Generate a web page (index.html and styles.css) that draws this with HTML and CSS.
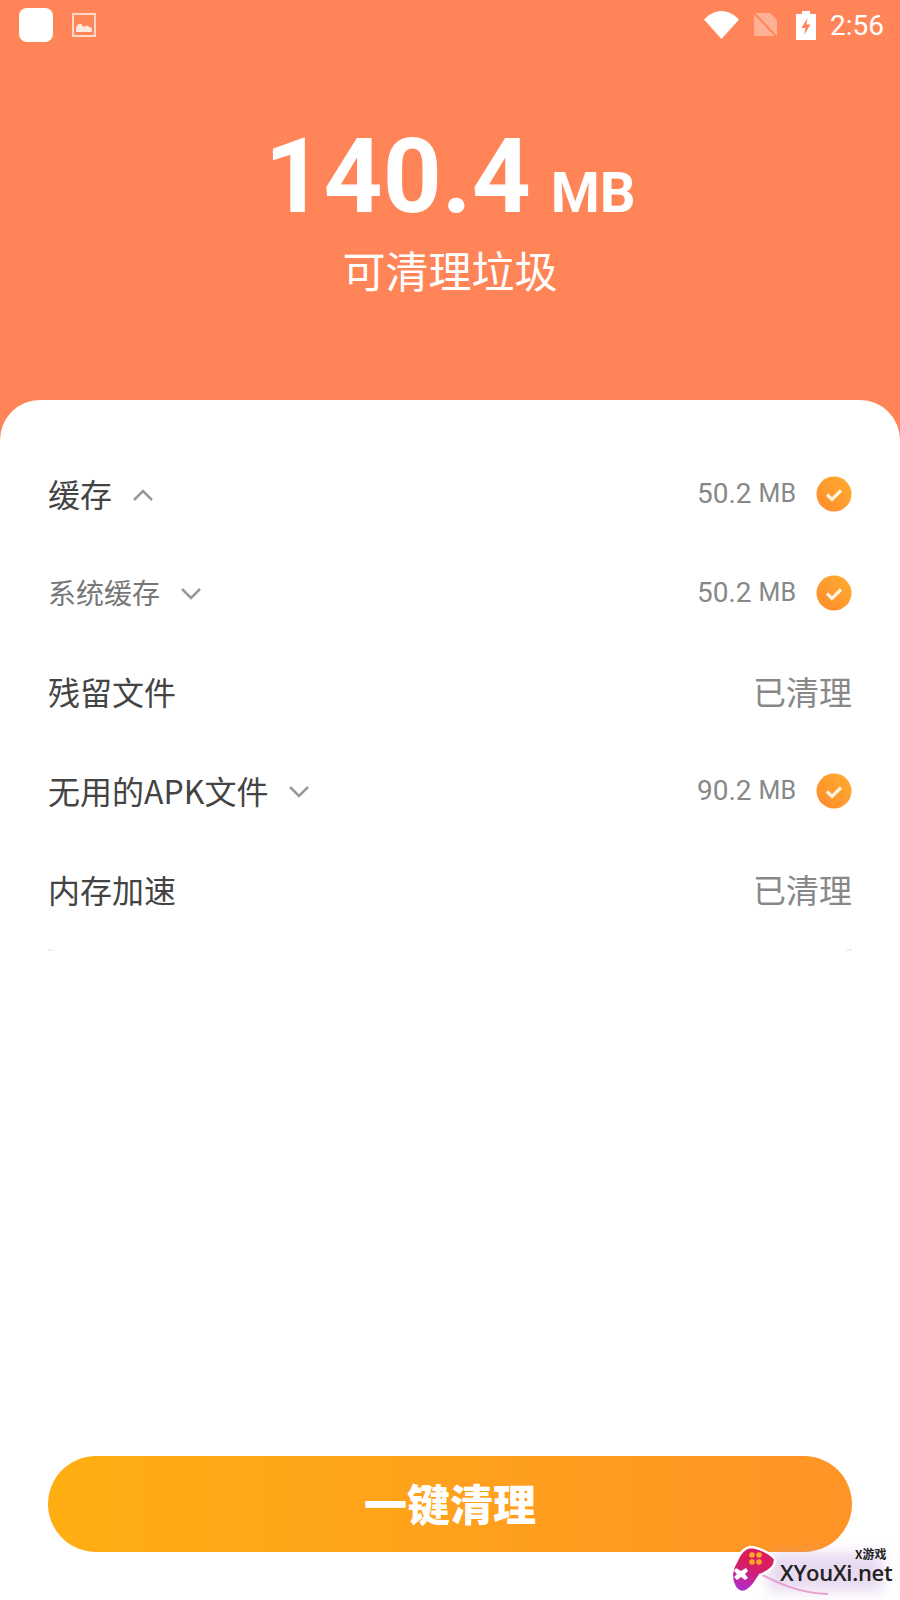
FILE: index.html
```html
<!DOCTYPE html>
<html>
  <head>
    <meta charset="utf-8">
    <title>清理</title>
    <link rel="stylesheet" href="styles.css">
  </head>
  <body>
    <div class="page">
      <div class="top">
        <div class="status">
          <div class="status_left">
            <div class="app_dot"></div>
            <svg class="pic_icon" width="24" height="24" viewBox="0 0 24 24">
              <rect x="1" y="1" width="22" height="22" fill="none" stroke="#ffd9c8" stroke-width="2"/>
              <path d="M4 19v-4c1-3 3-5 5-4l3 3c2-2 4-1 5 0 1 0 2 0 3 2v3z" fill="#ffe9df"/>
            </svg>
          </div>
          <div class="status_right">
            <svg class="wifi" width="35" height="28" viewBox="0 0 35 28"><path d="M0 8.500C5 3.500 11 0 17.500 0S30 3.500 35 8.500L17.500 28z" fill="#fff"/></svg>
            <svg class="sim" width="25" height="26" viewBox="0 0 25 26">
              <path d="M1 1h16l7 7v16H1z" fill="#ffb196"/>
              <path d="M0 0l25 26" stroke="#ff8559" stroke-width="2"/>
            </svg>
            <svg class="batt" width="20" height="29" viewBox="0 0 20 29">
              <path d="M6 0h8v3h6v26H0V3h6z" fill="#fff"/>
              <path d="M11.500 7l-6 10h4l-1.500 7 6.500-10.500h-4z" fill="#ff8559"/>
            </svg>
            <span class="clock">2:56</span>
          </div>
        </div>
        <div class="total"><span class="total_num">140.4</span><span class="total_unit">MB</span></div>
        <div class="total_label">可清理垃圾</div>
      </div>

      <div class="sheet">
        <div class="list">
          <div class="row">
            <div class="row_name">缓存
              <svg class="arrow" width="22" height="14" viewBox="0 0 22 14"><path d="M2 12l9-9 9 9" fill="none" stroke="#999" stroke-width="2.500"/></svg>
            </div>
            <div class="row_val">50.2<span class="unit">MB</span>
              <svg class="check" width="36" height="36" viewBox="0 0 36 36"><use href="#tick"/></svg>
            </div>
          </div>
          <div class="row">
            <div class="row_name sub">系统缓存
              <svg class="arrow" width="22" height="14" viewBox="0 0 22 14"><path d="M2 2l9 9 9-9" fill="none" stroke="#999" stroke-width="2.500"/></svg>
            </div>
            <div class="row_val">50.2<span class="unit">MB</span>
              <svg class="check" width="36" height="36" viewBox="0 0 36 36"><use href="#tick"/></svg>
            </div>
          </div>
          <div class="row">
            <div class="row_name">残留文件</div>
            <div class="row_done">已清理</div>
          </div>
          <div class="row">
            <div class="row_name">无用的APK文件
              <svg class="arrow" width="22" height="14" viewBox="0 0 22 14"><path d="M2 2l9 9 9-9" fill="none" stroke="#999" stroke-width="2.500"/></svg>
            </div>
            <div class="row_val">90.2<span class="unit">MB</span>
              <svg class="check" width="36" height="36" viewBox="0 0 36 36"><use href="#tick"/></svg>
            </div>
          </div>
          <div class="row">
            <div class="row_name">内存加速</div>
            <div class="row_done">已清理</div>
          </div>
          <div class="list_end"><span class="corner_l"></span><span class="corner_r"></span></div>
        </div>
        <div class="clean_btn">一键清理</div>
      </div>

      <svg class="defs" width="0" height="0">
        <defs>
          <linearGradient id="tickbg" x1="0" y1="1" x2="1" y2="0">
            <stop offset="0" stop-color="#ff8a2c"/>
            <stop offset="1" stop-color="#ffae30"/>
          </linearGradient>
          <linearGradient id="padbg" x1="0.600" y1="0" x2="0.300" y2="1">
            <stop offset="0.400" stop-color="#d81e5f"/>
            <stop offset="1" stop-color="#b02cd0"/>
          </linearGradient>
          <g id="tick">
            <circle cx="18" cy="18" r="17.500" fill="url(#tickbg)"/>
            <path d="M11 18.500l5 5 9-9" fill="none" stroke="#fff4e0" stroke-width="3.200"/>
          </g>
        </defs>
      </svg>

      <div class="mark">
        <div class="mark_glow"></div>
        <svg class="mark_logo" width="130" height="55" viewBox="0 0 130 55">
          <path d="M30 28C50 38 70 48 100 49" fill="none" stroke="#e9a0d0" stroke-width="2"/>
          <path d="M9 15C12 8 17 3 22 2 30 2 42 8 47 14 48 22 40 27 32 30 27 38 22 46 15 47 8 47 3 38 4 28 5 22 7 18 9 15z" fill="url(#padbg)" stroke="#fff" stroke-width="2.500"/>
          <path d="M8 23l5 3 5-3 2 3-3 3 3 4-3 2-4-3-4 3-3-3 3-3-3-3z" fill="#fff"/>
          <circle cx="24" cy="10" r="2.800" fill="#ffa726"/>
          <circle cx="31" cy="10" r="2.800" fill="#ffa726"/>
          <circle cx="24" cy="17" r="2.800" fill="#ffa726"/>
          <circle cx="31" cy="17" r="2.800" fill="#ffa726"/>
        </svg>
        <div class="mark_small">X游戏</div>
        <div class="mark_big">XYouXi.net</div>
      </div>
    </div>
  </body>
</html>
```

FILE: styles.css
```css
html, body {
  margin: 0;
  padding: 0;
}

.page {
  position: relative;
  width: 900px;
  height: 1600px;
  overflow: hidden;
  background-color: #ff8559;
  font-family: "Noto Sans CJK SC", Roboto, sans-serif;
}

.top {
  height: 400px;
  color: #ffffff;
  text-align: center;
}

.status {
  display: flex;
  justify-content: space-between;
  align-items: center;
  height: 50px;
  padding: 0 16px 0 19px;
}

.status_left, .status_right {
  display: flex;
  align-items: center;
}

.app_dot {
  width: 34px;
  height: 34px;
  border-radius: 8px;
  background-color: #ffffff;
}

.pic_icon {
  margin-left: 19px;
}

.wifi {
  margin-right: 14px;
}

.sim {
  margin-right: 18px;
}

.batt {
  margin-right: 14px;
}

.clock {
  font-family: Roboto, sans-serif;
  font-size: 28px;
}

.total {
  margin-top: 72px;
  height: 110px;
  line-height: 110px;
  font-family: "Liberation Sans Narrow", Roboto, sans-serif;
  font-weight: 700;
}

.total_num {
  font-size: 103px;
}

.total_unit {
  margin-left: 20px;
  font-size: 56px;
}

.total_label {
  margin-top: 9px;
  font-size: 43px;
  line-height: 56px;
}

.sheet {
  display: flex;
  flex-direction: column;
  height: 1200px;
  box-sizing: border-box;
  padding: 45px 48px 48px;
  border-radius: 40px 40px 0 0;
  background-color: #ffffff;
}

.list {
  flex: 1;
}

.row {
  display: flex;
  justify-content: space-between;
  align-items: center;
  height: 99px;
}

.row_name {
  display: flex;
  align-items: center;
  font-size: 32px;
  line-height: 44px;
  margin-top: -4px;
  color: #444444;
}

.row_name.sub {
  font-size: 28px;
  color: #777777;
}

.arrow {
  margin-left: 20px;
  margin-top: 4px;
}

.row_val {
  display: flex;
  align-items: center;
  margin-top: -2px;
  font-family: Roboto, sans-serif;
  font-size: 28px;
  color: #888888;
}

.unit {
  margin-left: 7px;
  font-size: 25px;
}

.check {
  margin-left: 20px;
}

.row_done {
  font-size: 33px;
  line-height: 44px;
  margin-top: -4px;
  color: #888888;
}

.list_end {
  display: flex;
  justify-content: space-between;
  height: 11px;
}

.corner_l, .corner_r {
  width: 6px;
  height: 11px;
}

.corner_l {
  background: radial-gradient(circle at 100% 0, #ffffff 70%, #eeeeee 85%);
}

.corner_r {
  background: radial-gradient(circle at 0 0, #ffffff 70%, #eeeeee 85%);
}

.clean_btn {
  height: 96px;
  line-height: 92px;
  border-radius: 48px;
  text-align: center;
  font-size: 43px;
  font-weight: 900;
  color: #ffffff;
  background: linear-gradient(90deg, #ffae12, #ff9426);
}

.defs {
  position: absolute;
}

.mark {
  position: absolute;
  left: 728px;
  top: 1545px;
  width: 172px;
  height: 55px;
}

.mark_glow {
  position: absolute;
  left: 40px;
  top: 8px;
  width: 115px;
  height: 38px;
  background-color: rgba(190, 150, 215, 0.35);
  filter: blur(7px);
}

.mark_logo {
  position: absolute;
  left: 0;
  top: 0;
}

.mark_small {
  position: absolute;
  left: 127px;
  top: 0;
  font-size: 12px;
  font-weight: 700;
  color: #222222;
}

.mark_big {
  position: absolute;
  left: 52px;
  top: 12px;
  font-family: "Open Sans", sans-serif;
  font-size: 22px;
  font-weight: 600;
  letter-spacing: -0.3px;
  color: #222222;
}
```
